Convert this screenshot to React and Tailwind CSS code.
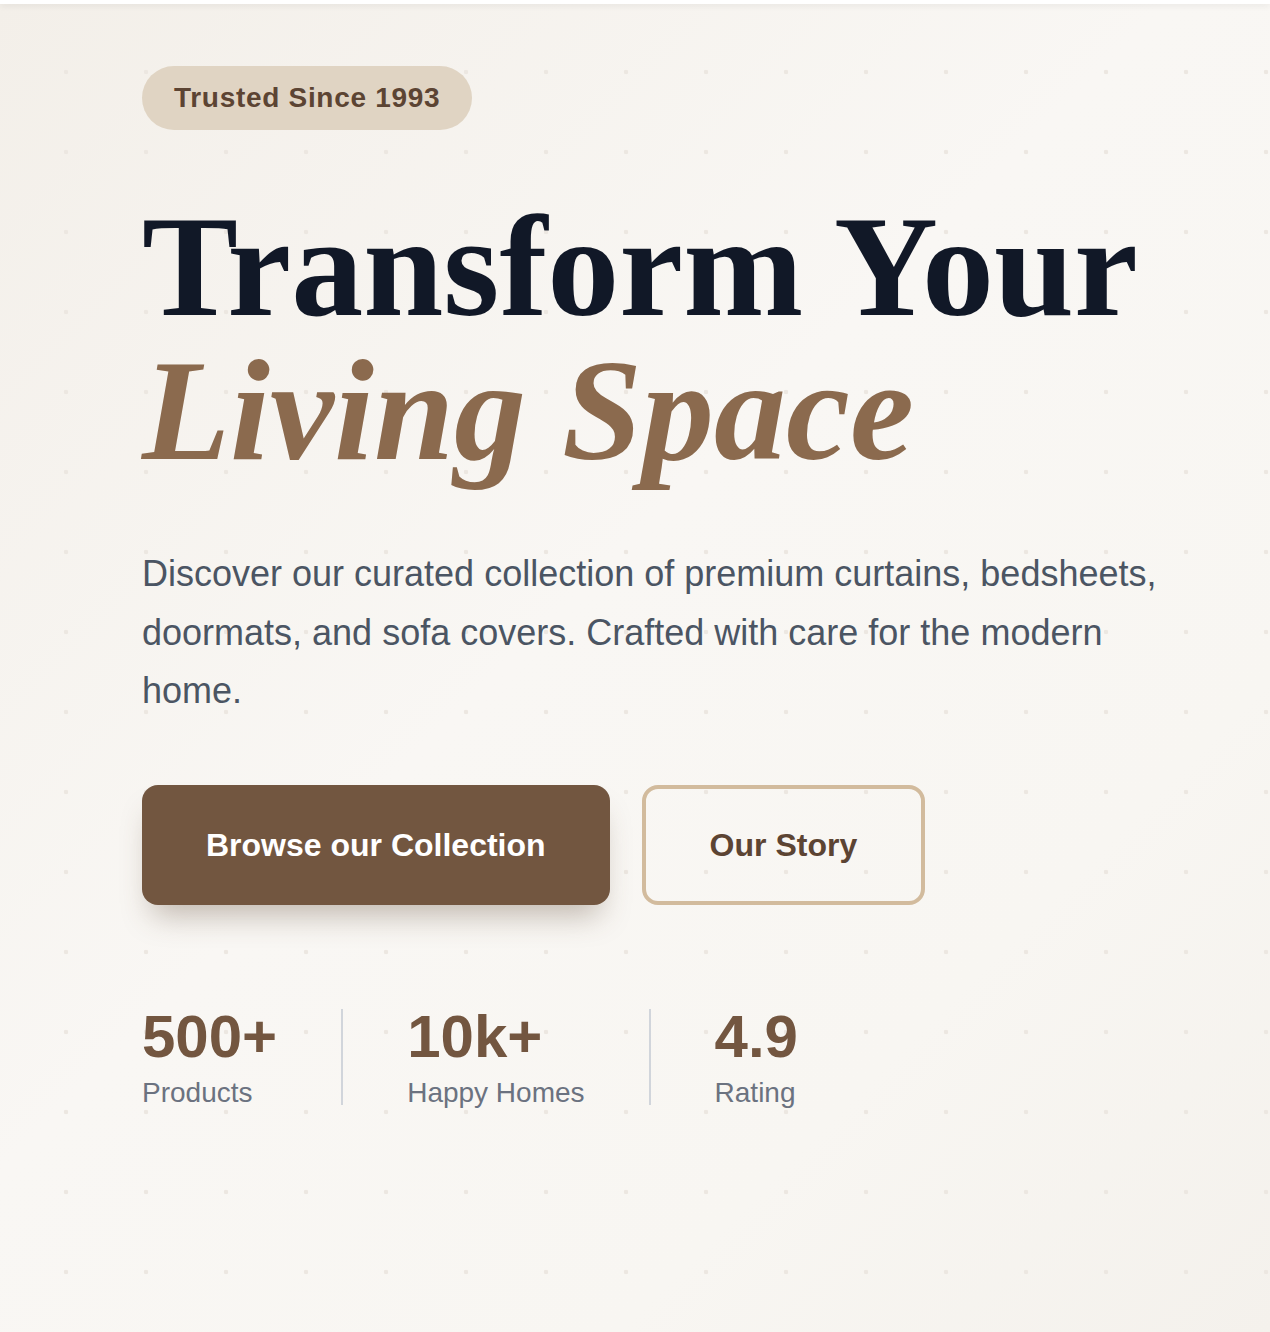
import React from "react";

const stats = [
  { value: "500+", label: "Products" },
  { value: "10k+", label: "Happy Homes" },
  { value: "4.9", label: "Rating" },
];

const StatsRow = () => {
  return (
    <div className="flex flex-row items-center gap-[64px] mt-[96px]">
      {stats.map((s, i) => (
        <React.Fragment key={s.label}>
          {i > 0 && <div className="w-[2px] h-[96px] bg-[#d1d5db]" />}
          <div className="flex flex-col">
            <span className="text-[60px] leading-[72px] font-bold text-[#735640]">{s.value}</span>
            <span className="text-[28px] leading-[40px] text-[#6b7280]">{s.label}</span>
          </div>
        </React.Fragment>
      ))}
    </div>
  );
};

export default function App() {
  return (
    <div
      className="min-h-[1332px] w-full font-['Liberation_Sans',Arial,sans-serif] bg-[radial-gradient(circle_at_center,#ece7e1_2px,transparent_2.6px),linear-gradient(135deg,#f3efe9_0%,#f9f7f4_45%,#f8f6f2_75%,#f4f1ec_100%)] [background-size:80px_80px,100%_100%] [background-position:26px_32px,0_0]"
    >
      <div className="h-[4px] w-full bg-white shadow-[0_2px_6px_rgba(0,0,0,0.08)]" />

      <section className="pl-[142px] pt-[62px] pb-[200px]">
        <div className="flex">
          <span className="rounded-full bg-[#e0d4c3] px-[32px] py-[12px] text-[28px] leading-[40px] font-bold tracking-wide text-[#5c4433]">
            Trusted Since 1993
          </span>
        </div>

        <h1 className="mt-[65px] font-['Liberation_Serif','Times_New_Roman',serif] font-bold text-[144px] leading-[144px] text-[#111827]">
          Transform Your
          <span className="block italic text-[#8b6a4e]">Living Space</span>
        </h1>

        <p className="mt-[62px] max-w-[1040px] text-[36px] leading-[58.5px] text-[#4b5563]">
          Discover our curated collection of premium curtains, bedsheets, doormats, and sofa covers. Crafted with care for the modern home.
        </p>

        <div className="flex flex-row gap-[32px] mt-[64px]">
          <button className="rounded-[16px] bg-[#725640] px-[64px] py-[36px] text-[32px] leading-[48px] font-bold text-white shadow-[0_20px_30px_-10px_rgba(90,65,45,0.35)]">
            Browse our Collection
          </button>
          <button className="rounded-[16px] border-[4px] border-[#d2bb9d] px-[64px] py-[32px] text-[32px] leading-[48px] font-bold text-[#5c4433]">
            Our Story
          </button>
        </div>

        <StatsRow />
      </section>
    </div>
  );
}
